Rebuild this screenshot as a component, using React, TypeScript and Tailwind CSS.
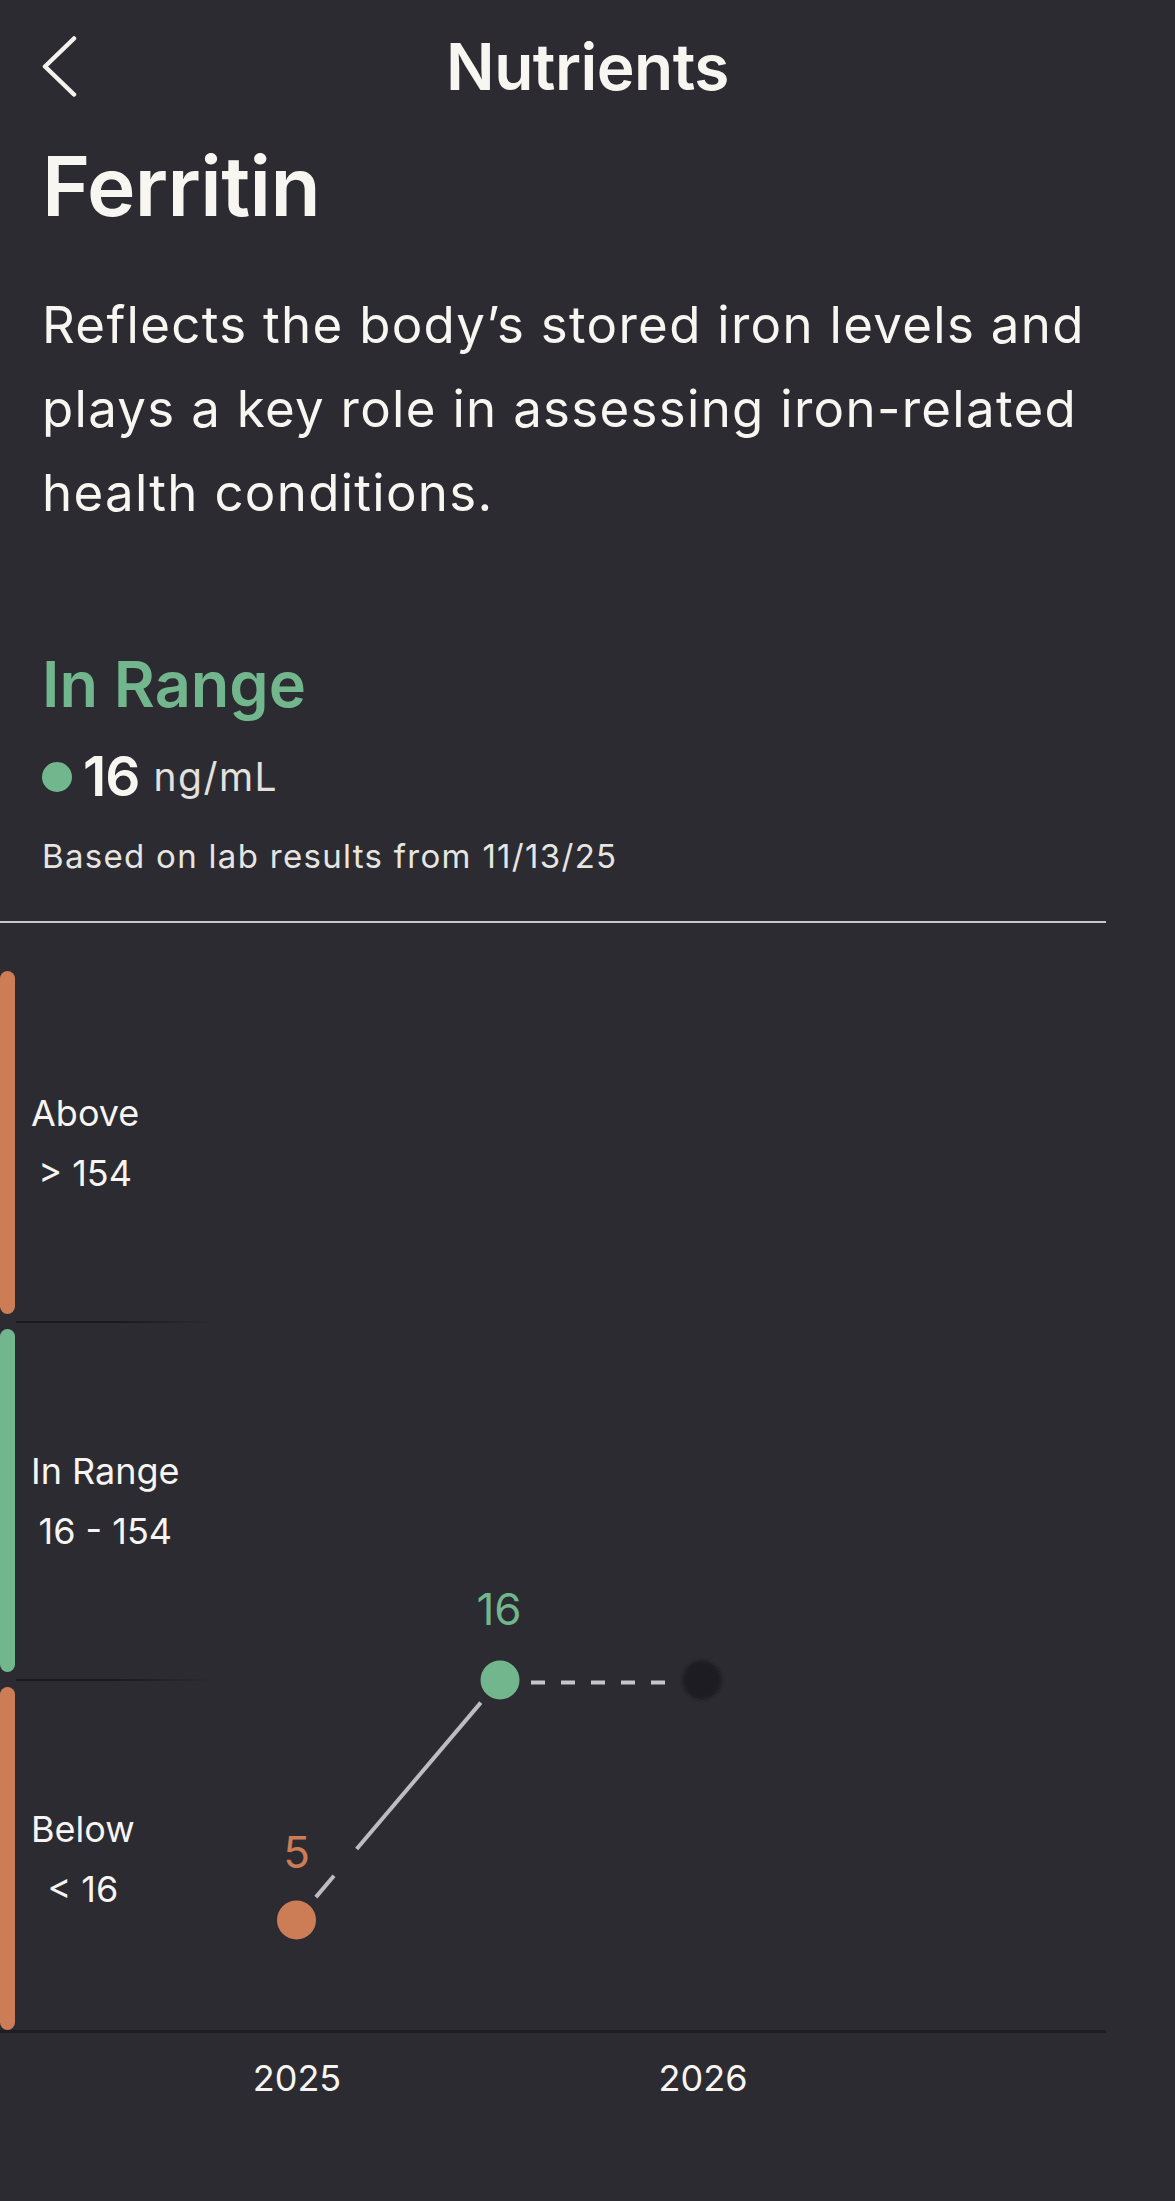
import React from "react";

const ORANGE = "#CD7D56";
const GREEN = "#72B68D";

function Band({ color, title, range }: { color: string; title: string; range: string }) {
  return (
    <div className="flex h-[343px]">
      <div className="h-full w-[15px] rounded-full" style={{ backgroundColor: color }} />
      <div className="ml-[16px] flex flex-col items-center justify-center text-[36px] leading-[60px] text-[#f6f5f2]">
        <span>{title}</span>
        <span>{range}</span>
      </div>
    </div>
  );
}

function Sep() {
  return (
    <div className="flex h-[15px] items-center">
      <div className="ml-[16px] h-[2px] w-[200px] bg-gradient-to-r from-[#1b1a1f] via-[#1b1a1f] to-transparent" />
    </div>
  );
}

export default function App() {
  const ux = 0.6467;
  const uy = -0.7627;
  const ox = 296.5;
  const oy = 949;
  const p = (d: number) => [ox + ux * d, oy + uy * d];
  const [a1x, a1y] = p(30);
  const [a2x, a2y] = p(58);
  const [b1x, b1y] = p(93);
  const [b2x, b2y] = p(285);

  return (
    <div
      className="min-h-[2201px] w-full bg-[#2c2b31] text-[#f8f6f1]"
      style={{ fontFamily: "Inter, 'Noto Sans', sans-serif" }}
    >
      {/* Header */}
      <div className="grid h-[133px] grid-cols-[1fr_auto_1fr] items-center">
        <div className="flex items-center">
          <svg width="36" height="61" viewBox="0 0 36 61" className="ml-[41px]">
            <polyline
              points="33,2.5 4,30.5 33,58.5"
              fill="none"
              stroke="#f5f3ee"
              strokeWidth="4.5"
              strokeLinecap="round"
              strokeLinejoin="round"
            />
          </svg>
        </div>
        <div className="text-[64px] font-semibold leading-[64px] tracking-[-0.5px]">Nutrients</div>
        <div />
      </div>

      <div className="px-[42px]">
        <h1 className="mt-[13px] text-[82px] font-semibold leading-[82px] tracking-[-0.6px]">Ferritin</h1>
        <p className="mt-[55px] text-[51px] leading-[84px] tracking-[1.3px]">
          Reflects the body’s stored iron levels and plays a key role in assessing iron-related health
          conditions.
        </p>
        <div className="mt-[118px] text-[63px] font-semibold leading-[63px]" style={{ color: GREEN }}>
          In Range
        </div>
        <div className="mt-[33px] flex h-[55px] items-center">
          <div className="h-[30px] w-[30px] rounded-full" style={{ backgroundColor: GREEN }} />
          <span className="ml-[11px] text-[55px] font-semibold leading-[55px] tracking-[-1px]">16</span>
          <span className="ml-[14px] text-[39px] leading-[39px] tracking-[1.5px] text-[#e2e1de]">ng/mL</span>
        </div>
        <div className="mt-[36px] text-[33px] leading-[33px] tracking-[1.3px] text-[#e6e5e2]">
          Based on lab results from 11/13/25
        </div>
      </div>

      <div className="mt-[48px] h-[2px] w-[1106px] bg-[#c9c8cc]" />

      {/* Chart */}
      <div className="relative mt-[48px] w-[1106px]">
        <div className="flex flex-col">
          <Band color={ORANGE} title="Above" range="> 154" />
          <Sep />
          <Band color={GREEN} title="In Range" range="16 - 154" />
          <Sep />
          <Band color={ORANGE} title="Below" range="< 16" />
          <div className="h-[3px] w-full bg-[#1e1d22]" />
        </div>

        <svg
          className="pointer-events-none absolute left-0 top-0"
          width="1106"
          height="1062"
          viewBox="0 0 1106 1062"
        >
          <defs>
            <filter id="soft" x="-50%" y="-50%" width="200%" height="200%">
              <feGaussianBlur stdDeviation="1.4" />
            </filter>
          </defs>
          <line x1={a1x} y1={a1y} x2={a2x} y2={a2y} stroke="#bdbcc0" strokeWidth="4" />
          <line x1={b1x} y1={b1y} x2={b2x} y2={b2y} stroke="#bdbcc0" strokeWidth="4" />
          <line
            x1="531"
            y1="711.5"
            x2="665"
            y2="711.5"
            stroke="#c6c5c9"
            strokeWidth="4"
            strokeDasharray="14 16"
          />
          <circle cx="702" cy="709" r="19.5" fill="#1d1c21" filter="url(#soft)" />
          <circle cx="500" cy="709" r="19.5" fill={GREEN} />
          <circle cx="296.5" cy="949" r="19.5" fill={ORANGE} />
          <text
            x="499"
            y="654"
            textAnchor="middle"
            fontSize="44"
            fill={GREEN}
            style={{ fontFamily: "Inter, sans-serif" }}
          >
            16
          </text>
          <text
            x="296.5"
            y="897"
            textAnchor="middle"
            fontSize="44"
            fill={ORANGE}
            style={{ fontFamily: "Inter, sans-serif" }}
          >
            5
          </text>
        </svg>

        <div className="relative mt-[27px] h-[36px] text-[36px] leading-[36px] text-[#f6f5f2]">
          <span className="absolute left-[297px] top-0 -translate-x-1/2">2025</span>
          <span className="absolute left-[703px] top-0 -translate-x-1/2">2026</span>
        </div>
      </div>
    </div>
  );
}
